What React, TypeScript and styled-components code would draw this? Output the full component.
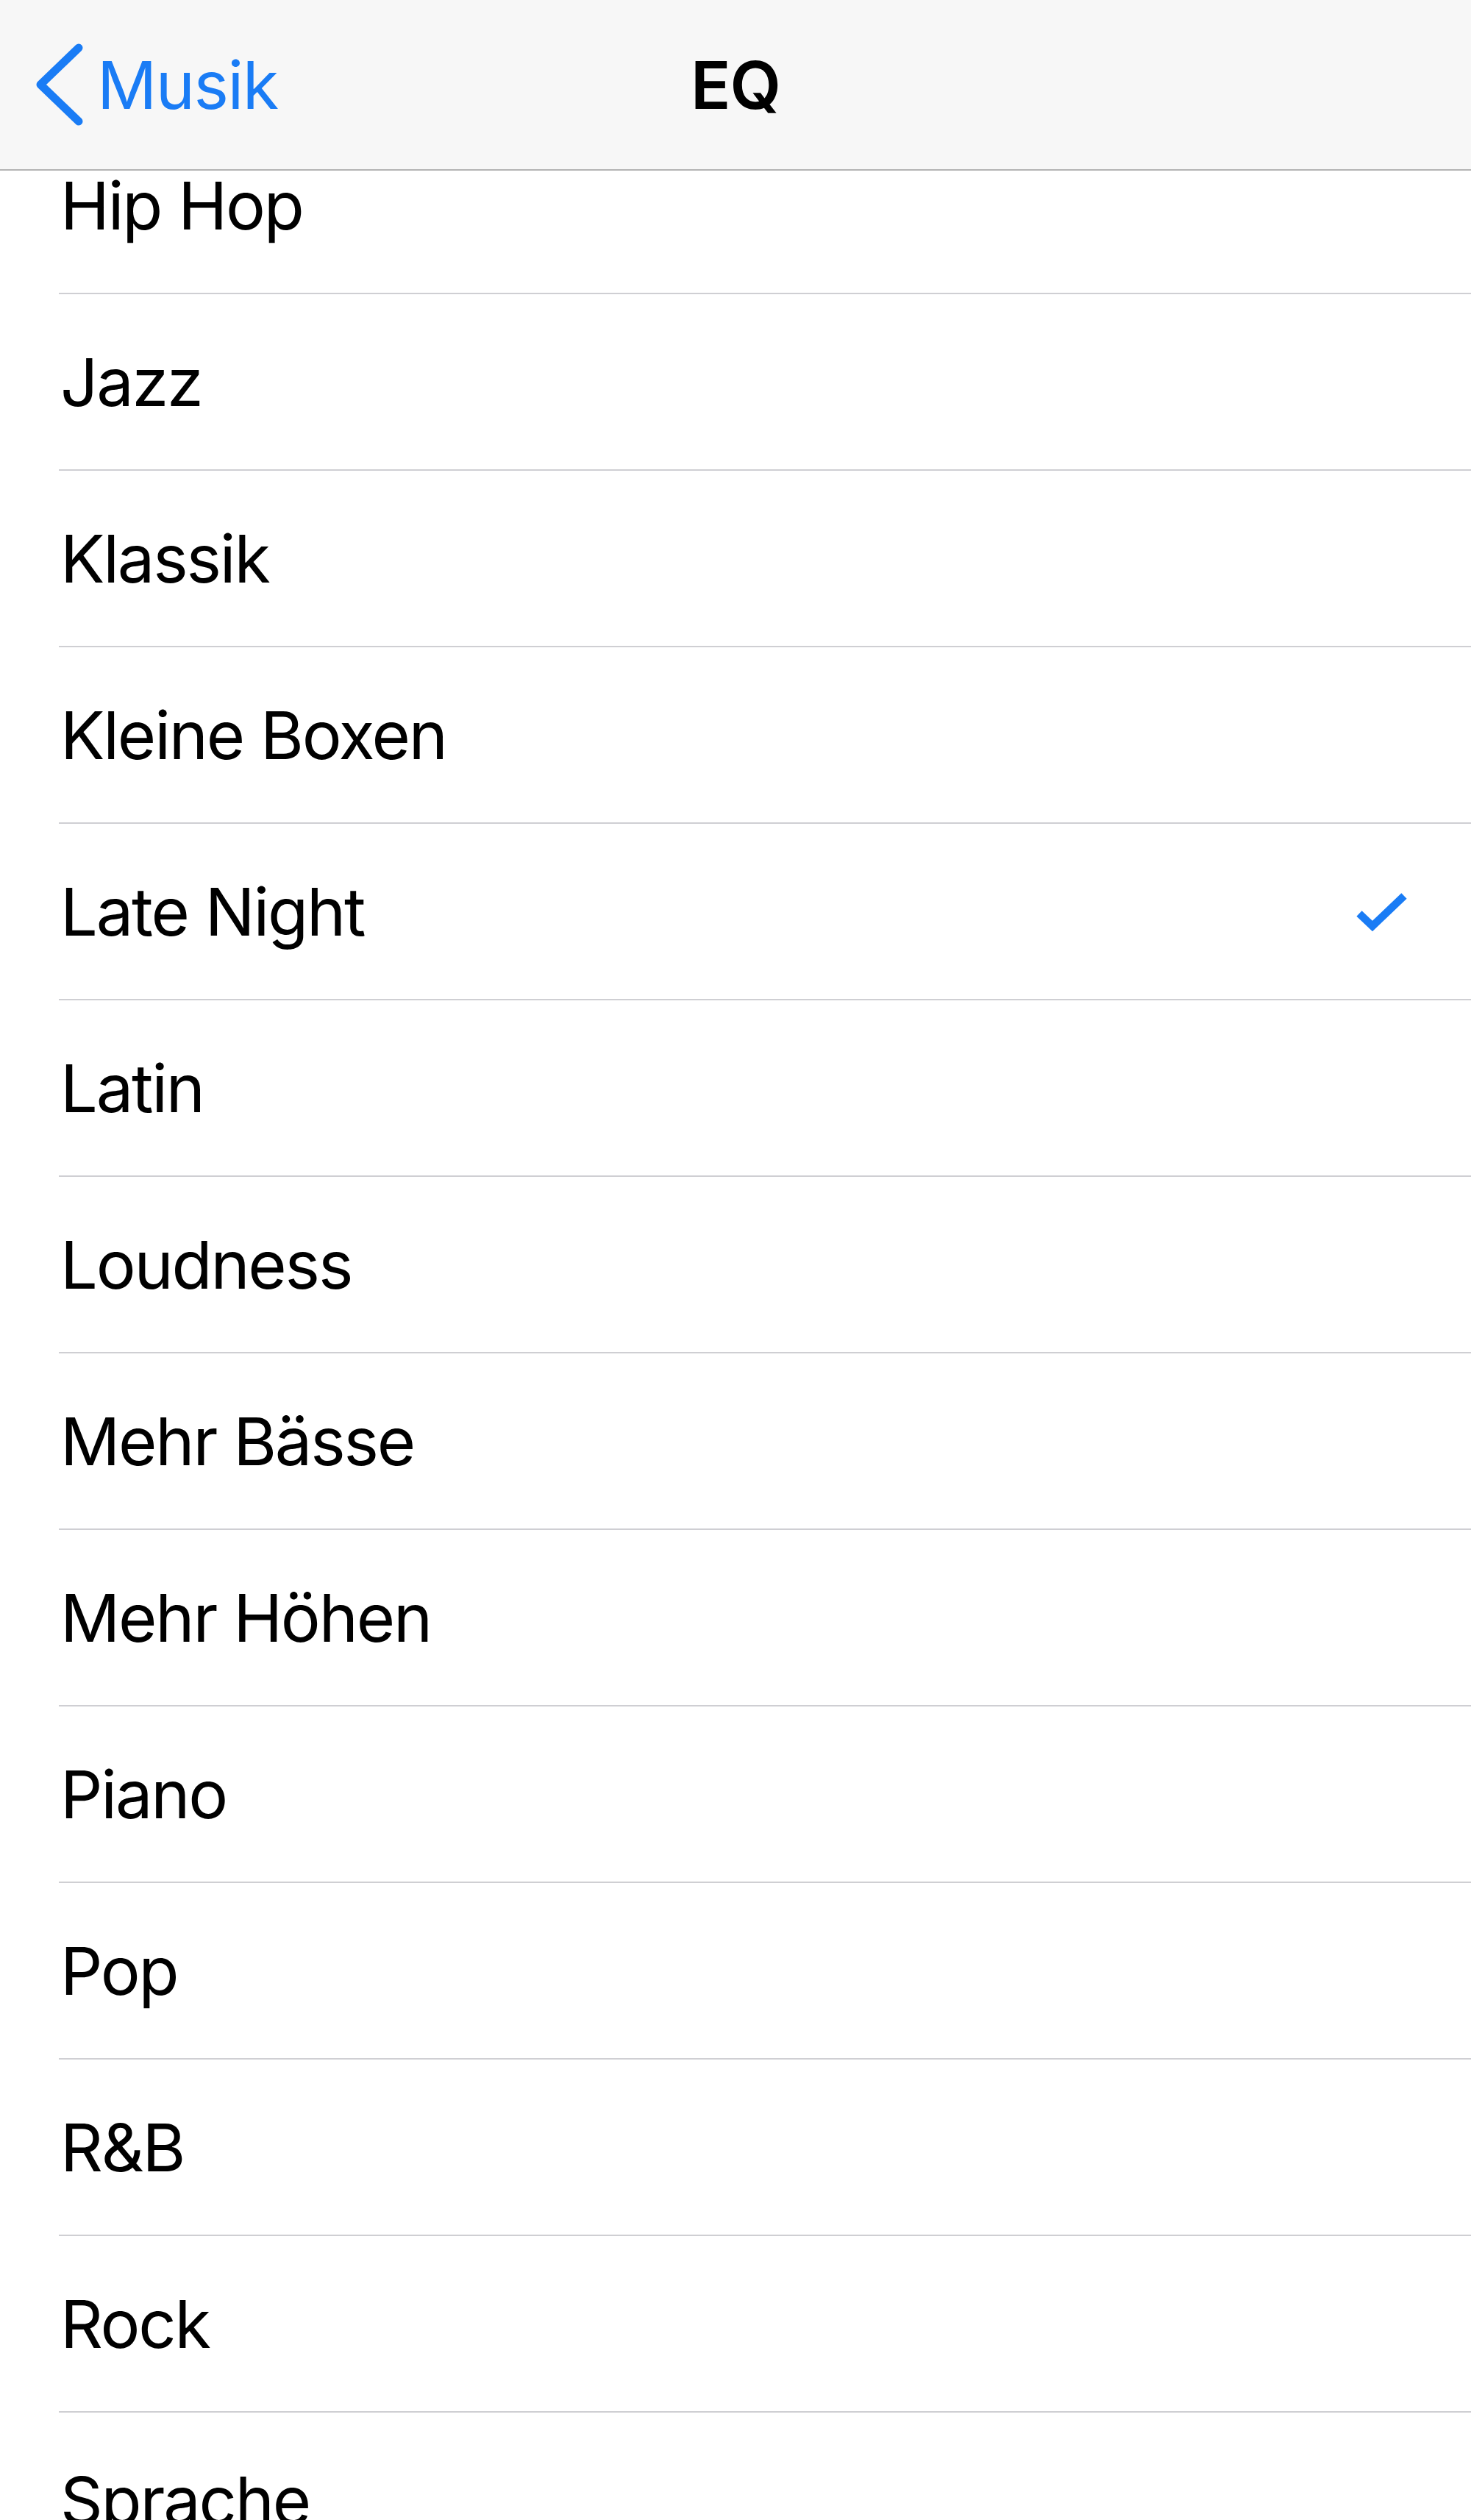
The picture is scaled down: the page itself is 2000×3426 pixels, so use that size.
import React from 'react';
import styled, { createGlobalStyle } from 'styled-components';

const GlobalStyle = createGlobalStyle`
  html, body { margin: 0; padding: 0; background: #ffffff; }
  body { font-family: Inter, "Noto Sans", "Liberation Sans", sans-serif; -webkit-font-smoothing: antialiased; }
`;

const Screen = styled.div`
  position: relative;
  width: 2000px;
  height: 3426px;
  overflow: hidden;
  background: #ffffff;
`;

const NavBar = styled.header`
  position: absolute;
  top: 0;
  left: 0;
  right: 0;
  height: 230px;
  box-sizing: content-box;
  background: #f7f7f7;
  border-bottom: 2px solid #b4b4b4;
  display: grid;
  grid-template-columns: 1fr auto 1fr;
  align-items: center;
  z-index: 1;
`;

const BackButton = styled.div`
  display: flex;
  align-items: center;
  gap: 14px;
  padding-left: 44px;
  color: #1a7cf5;
  font-size: 90px;
  font-weight: 400;
  letter-spacing: -1.5px;
`;

const Title = styled.h1`
  margin: 0;
  font-size: 90px;
  font-weight: 600;
  color: #000;
  letter-spacing: -1px;
`;

const List = styled.ul`
  list-style: none;
  margin: 0;
  padding: 160px 0 0 0;
`;

const Row = styled.li`
  box-sizing: border-box;
  height: 240px;
  margin-left: 80px;
  padding: 0 86px 0 2px;
  border-bottom: 2px solid #cfcfd3;
  display: flex;
  align-items: center;
  justify-content: space-between;
  font-size: 90px;
  color: #000;
  letter-spacing: -2.2px;
`;

const Check = styled.svg`
  width: 70px;
  height: 60px;
  flex: none;
  margin-top: 6px;
`;

const Chevron = () => (
  <svg width="74" height="112" viewBox="0 0 74 112">
    <path d="M63 6 L11 56 L63 106" fill="none" stroke="#1a7cf5" strokeWidth="11" strokeLinecap="round" strokeLinejoin="round" />
  </svg>
);

const presets = [
  'Hip Hop',
  'Jazz',
  'Klassik',
  'Kleine Boxen',
  'Late Night',
  'Latin',
  'Loudness',
  'Mehr Bässe',
  'Mehr Höhen',
  'Piano',
  'Pop',
  'R&B',
  'Rock',
  'Sprache',
];

export default function App() {
  const selected = 'Late Night';
  return (
    <>
      <GlobalStyle />
      <Screen>
        <NavBar>
          <BackButton>
            <Chevron />
            <span>Musik</span>
          </BackButton>
          <Title>EQ</Title>
          <div />
        </NavBar>
        <List>
          {presets.map((p) => (
            <Row key={p}>
              <span>{p}</span>
              {p === selected && (
                <Check viewBox="0 0 70 60">
                  <path d="M4 30 L22 47 L65 6" fill="none" stroke="#1a7cf5" strokeWidth="10.5" />
                </Check>
              )}
            </Row>
          ))}
        </List>
      </Screen>
    </>
  );
}
